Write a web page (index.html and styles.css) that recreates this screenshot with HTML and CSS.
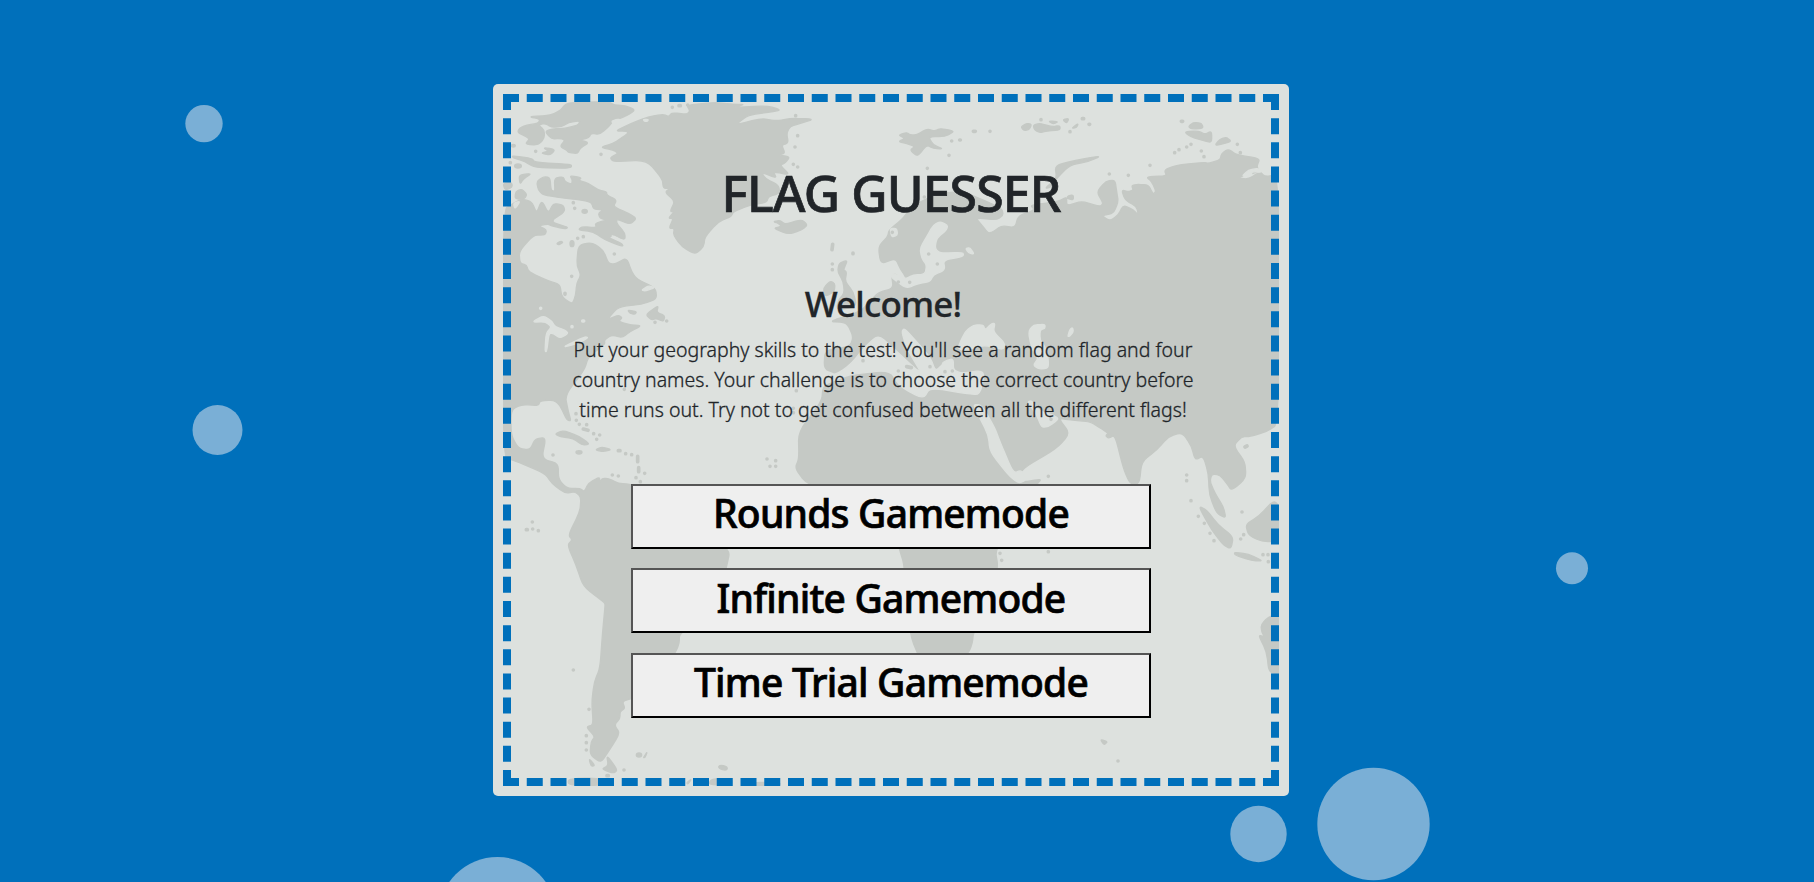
FILE: index.html
```html
<!DOCTYPE html>
<html lang="en">
<head>
<meta charset="utf-8">
<title>Flag Guesser</title>
<link rel="stylesheet" href="styles.css">
</head>
<body>
<svg class="bubbles" viewBox="0 0 1814 882" aria-hidden="true">
  <circle cx="204" cy="123.6" r="18.7"/><circle cx="217.5" cy="430" r="25"/>
  <circle cx="1258.5" cy="834" r="28.2"/><circle cx="1373.5" cy="824" r="56.2"/>
  <circle cx="1572" cy="568.3" r="16"/><circle cx="497.5" cy="916" r="59"/>
</svg>
<main class="card">
  <svg class="map" viewBox="54 57 2328 2076" aria-hidden="true">
    <g class="land">
      <!-- Arctic Canada -->
      <path d="M130 125L198 121L228 105L240 88L262 82L370 80L388 90L420 92L452 105L425 122L400 132L385 133L378 148L345 178L318 175L312 188L285 195L312 203L285 220L278 236L250 232L245 225L225 215L240 195L225 190L200 192L180 170L200 162L240 160L280 150L285 137L250 143L230 155L200 157L180 145L160 150L178 165L178 190L160 210L120 208L135 190L98 173L102 160L125 150L160 145L165 132Z"/>
      <path d="M82 242L140 250L150 262L260 268L258 280L150 278L120 260L84 248ZM102 300L140 295L115 312L105 328ZM155 320L175 305L195 307L198 345L210 350L208 310L235 305L240 320L260 328L262 315L255 302L290 308L280 316L310 325L340 345L365 350L365 360L395 375L385 395L430 415L455 430L435 448L395 432L395 445L420 475L420 495L385 480L370 488L410 505L415 515L360 495L325 470L280 465L290 455L335 458L330 445L365 435L345 430L340 415L355 405L325 402L320 382L290 375L240 370L175 360L160 345ZM92 350L110 342L126 358L118 372L90 372ZM54 325L80 322L82 337L60 345ZM168 235L190 228L175 218L205 222L208 228L195 240ZM215 505L228 498L234 503L220 510Z"/>
      <ellipse cx="99" cy="273" rx="10" ry="6"/><ellipse cx="85" cy="212" rx="6" ry="4"/><ellipse cx="299" cy="409" rx="8" ry="6"/><ellipse cx="261" cy="506" rx="6" ry="9"/>
      <!-- Americas -->
      <path d="M54 405L85 385L110 372L140 380L155 415L170 375L190 415L205 385L235 390L240 410L195 440L250 457L240 462L198 452L190 447L160 452L185 465L180 480L145 480L102 530L105 565L125 570L130 590L190 618L225 628L230 665L262 688L272 660L275 625L288 600L275 570L280 510L320 502L355 525L370 565L390 568L425 548L440 590L455 612L512 640L515 672L470 688L400 695L365 735L400 720L412 728L400 740L440 750L470 752L435 770L412 788L380 780L358 795L360 808L310 845L298 885L240 960L250 1010L258 1038L245 1035L225 990L205 975L165 978L160 992L110 988L78 1005L78 1080L100 1120L135 1125L150 1092L183 1087L170 1152L220 1165L220 1212L245 1240L285 1240L298 1250L310 1225L345 1205L342 1230L350 1210L370 1210L400 1225L438 1228L560 1280L660 1380L735 1425L725 1475L690 1600L583 1675L583 1705L570 1735L480 1870L438 1870L412 1880L420 1900L405 1910L405 1930L388 1950L405 1975L370 2030L348 2063L315 2040L318 2000L330 1985L303 1955L325 1950L320 1880L328 1820L345 1780L352 1680L360 1595L360 1585L350 1576L295 1535L273 1470L247 1410L262 1395L250 1380L285 1310L288 1265L270 1250L240 1255L200 1225L180 1195L85 1155L54 1150Z"/>
      <path d="M483 720L500 705L520 692L515 712L540 722L535 740L515 730L500 735ZM428 705L455 710L450 718L435 715ZM210 1077L235 1066L285 1085L315 1108L290 1110L265 1090L225 1085ZM330 1125L350 1116L380 1124L355 1130ZM365 2040L398 2085L385 2095L350 2082L370 2072ZM312 2050L330 2072L318 2074Z"/>
      <ellipse cx="282" cy="1132" rx="9" ry="5"/><ellipse cx="462" cy="2040" rx="8" ry="6"/><ellipse cx="714" cy="2078" rx="13" ry="6" transform="rotate(15 714 2078)"/>
      <path d="M475 2048L487 2030L480 2048ZM250 2112L330 2108L400 2126L300 2133L250 2128ZM680 2112L740 2110L740 2133L670 2128ZM795 2122L885 2122L885 2131L795 2131ZM605 2123L620 2112L608 2128Z"/>
      <!-- Greenland and Iceland -->
      <path d="M390 168L440 145L490 125L535 118L552 125L560 113L605 118L615 108L605 90L690 82L745 88L780 88L740 98L845 92L890 105L850 112L790 120L750 150L830 130L875 138L915 130L988 132L945 145L915 155L905 175L910 205L890 210L900 235L880 240L915 245L900 265L885 270L915 300L865 290L875 310L830 292L840 310L880 330L885 355L850 365L845 382L795 390L745 410L738 425L700 440L660 485L656 515L631 538L590 515L565 480L568 460L552 460L565 430L550 430L568 410L555 410L570 378L540 352L555 340L535 340L532 312L485 255L385 260L375 248L400 235L385 225L345 217L385 205L400 195L430 175L425 168ZM865 460L890 454L880 445L865 440L885 436L900 448L950 433L968 450L950 465L910 478Z"/>
      <!-- Europe, Asia and Africa -->
      <path d="M1180 515L1208 485L1212 465L1255 430L1275 400L1325 370L1395 350L1445 355L1495 375L1550 400L1555 420L1535 435L1472 428L1490 450L1510 475L1525 470L1550 452L1590 458L1600 422L1650 405L1635 390L1720 380L1745 365L1745 393L1790 378L1845 395L1855 385L1835 350L1863 318L1890 315L1895 350L1900 380L1885 415L1850 422L1875 438L1900 420L1915 390L1945 405L1960 420L1955 395L1920 375L1910 345L1930 350L1945 345L1940 332L1955 328L1990 330L2005 358L2013 348L2000 320L1983 305L2045 303L2038 285L2075 270L2155 262L2170 265L2205 255L2210 235L2230 222L2255 240L2325 250L2315 275L2325 290L2252 308L2290 313L2325 290L2340 305L2382 298L2382 1045L2345 1070L2295 1085L2270 1085L2245 1113L2280 1160L2283 1210L2240 1247L2225 1225L2205 1200L2180 1197L2175 1220L2190 1255L2215 1295L2223 1330L2195 1315L2173 1260L2170 1195L2155 1143L2130 1155L2120 1115L2092 1072L2050 1085L2015 1125L1970 1160L1963 1227L1935 1227L1915 1180L1890 1080L1870 1090L1862 1082L1870 1075L1840 1055L1815 1040L1755 1035L1720 1030L1755 1075L1715 1120L1605 1185L1610 1222L1670 1212L1655 1227L1600 1350L1530 1422L1540 1480L1500 1600L1465 1675L1462 1705L1450 1735L1380 1790L1310 1765L1273 1675L1258 1470L1243 1422L1220 1330L1100 1270L965 1227L930 1180L942 1150L940 1070L1010 980L1014 935L1050 915L1055 895L1017 882L1020 825L1095 815L1105 785L1085 742L1030 740L1125 710L1145 690L1180 652L1225 640L1220 600L1235 597L1242 620L1265 630L1262 605L1245 580L1232 550L1187 567Z"/>
      <path d="M1055 705L1115 695L1105 650L1080 620L1085 590L1075 585L1088 555L1062 565L1058 590L1075 620L1078 655L1060 675ZM1015 640L1035 618L1050 625L1048 650L1020 665ZM1680 340L1715 310L1710 272L1770 256L1850 242L1810 260L1755 270L1715 310L1695 338ZM1240 180L1265 172L1275 180L1295 180L1325 162L1350 168L1365 160L1410 168L1380 185L1330 185L1345 210L1375 222L1345 220L1325 210L1298 245L1275 225L1290 215L1265 205L1240 200L1260 190ZM1750 362L1765 360L1765 375L1745 370Z"/>
      <!-- Arctic islands -->
      <path d="M1608 155L1625 145L1640 148L1632 165L1615 166ZM1645 150L1665 145L1700 155L1725 152L1725 165L1685 168L1665 173L1648 165ZM1690 138L1720 140L1705 147ZM1733 134L1752 130L1745 145ZM1760 160L1780 145L1775 158ZM2110 155L2125 142L2150 145L2155 160L2120 162ZM2098 170L2140 168L2160 178L2180 168L2180 203L2155 197L2115 185ZM2188 213L2205 192L2225 187L2240 200Z"/>
      <!-- South-east Asia and Australia -->
      <path d="M2140 1293L2165 1305L2200 1350L2245 1385L2238 1422L2215 1410L2180 1365ZM2248 1432L2290 1437L2335 1458L2300 1457L2250 1440ZM2282 1348L2320 1325L2365 1277L2382 1290L2382 1400L2330 1400L2290 1380ZM2400 1610L2350 1625L2328 1650L2330 1670L2338 1685L2320 1680L2345 1730L2352 1795L2400 1795ZM1846 1993L1868 2000L1857 2010Z"/>
      <path class="dots" d="M562 97h0M582 92h4M608 90h0M152 229h0M348 238h0M265 383h0M269 400h0M278 490h0M295 485h0M388 537h0M260 604h0M240 655v3M510 742h0M545 738h0M76 263h0M932 122h0M938 182h0M930 216h0M925 268h0M938 276h0M1327 280h0M1392 241h0M1400 198h0M1424 195h2M1465 169h6M1515 169h0M1668 134h0M1792 131h4M1812 148h2M1755 170h0M2089 139h4M2257 208h0M2266 233h0M2069 233h0M2082 224h0M2105 216h0M2118 208h0M2149 228h0M2157 245h0M1995 271h0M1873 297h0M1930 301h0M1043 508l-2 16M1104 534v2M1042 567h0M1042 584h0M1318 366h0M418 943h0M273 1016h0M274 1036h0M283 1048h0M305 1049h0M295 1062l14 4M326 1076h0M344 1080h0M335 1093h0M400 1127h5M422 1136h0M440 1139h0M458 1144v16M461 1178v12M479 1195h0M453 1208h0M466 1220h0M204 1140h0M382 1200h0M400 1203h0M142 1341h0M124 1364h3M143 1362h0M160 1367h0M846 1152h0M872 1157h0M855 1174h0M872 1174h0M934 947h0M925 1000h0M925 1013h0M265 1785h0M312 1903h0M304 1982h0M304 2003h0M304 2025h0M417 2085h0M366 2102h4M1899 2058h0M1690 1204h0M1690 1430h0M1545 1435h0M1550 1456h0M2105 1200h0M2105 1217h0M2118 1277h0M2140 1324h0M2158 1345h0M2175 1375h0M2187 1397h0M2271 1311h0M2276 1379h0M2267 1392h0M2334 1439h0M2349 1439h0M2350 1460h0M2286 1113l-6 3"/>
    </g>
    <g class="sea">
      <!-- Mediterranean -->
      <path d="M1000 915L1060 895L1100 865L1140 815L1180 780L1225 820L1290 880L1310 895L1265 820L1250 770L1258 760L1290 795L1335 845L1352 890L1375 860L1405 850L1405 885L1430 895L1500 885L1485 960L1440 955L1335 938L1315 972L1245 935L1215 885L1100 897L1050 915L1014 930Z"/>
      <!-- Black Sea, Caspian and gulfs -->
      <path d="M1418 818L1440 770L1465 750L1495 750L1500 765L1520 745L1530 745L1525 770L1560 805L1555 825L1500 810L1455 822L1430 825ZM1630 770L1645 750L1680 748L1680 760L1665 765L1665 795L1680 815L1690 850L1690 880L1660 882L1645 870L1660 850L1640 820ZM1748 785L1755 762L1763 758L1765 770L1755 783ZM1628 980L1640 977L1665 1010L1705 1020L1722 1032L1690 1055L1670 1057L1655 1020ZM1465 988L1490 990L1530 1060L1545 1100L1585 1195L1610 1185L1625 1215L1600 1225L1570 1200L1515 1130L1510 1080L1480 1020Z"/>
      <!-- Baltic, North Sea inlets -->
      <path d="M1305 520L1325 485L1345 450L1365 440L1388 450L1385 465L1355 490L1350 520L1365 535L1435 532L1435 545L1375 555L1380 585L1345 600L1335 620L1300 625L1265 640L1235 620L1218 605L1225 595L1260 612L1285 600L1320 598L1325 570L1310 550ZM1442 520L1455 518L1468 538L1450 533ZM1215 460L1235 460L1238 480L1220 487ZM2270 305L2290 285L2320 280L2330 292L2300 290L2300 302Z"/>
      <path d="M140 742L175 722L200 738L210 755L240 765L250 775L225 790L205 775L192 775L185 830L180 830L183 775L200 755L180 740ZM230 818L300 785L310 788L280 805ZM380 138L400 132L412 137L385 147ZM475 133L490 133L488 139L478 139ZM378 480L405 492L395 495ZM85 385L106 378L90 402ZM470 645L490 632L510 638L480 648Z"/>
      <path class="dots" d="M167 700h0M261 755h0M293 738h3"/>
    </g>
    <path class="land dots" d="M1331 537h0M1313 585v2M1357 567h0M1240 621h0M1274 622h0M1222 472h0M1134 857h0M1240 888h0M1265 875l14 3M1335 875h0M1350 860l15 5-8 8M1380 890h0M1402 888h0M1698 1033h0"/>
  </svg>
  <div class="content">
    <h1 class="title">FLAG GUESSER</h1>
    <section class="intro">
      <h2 class="welcome">Welcome!</h2>
      <p class="text"><span class="line">Put your geography skills to the test! You'll see a random flag and four</span><span class="line">country names. Your challenge is to choose the correct country before</span><span class="line">time runs out. Try not to get confused between all the different flags!</span></p>
    </section>
    <nav class="modes">
      <button class="mode">Rounds Gamemode</button>
      <button class="mode">Infinite Gamemode</button>
      <button class="mode">Time Trial Gamemode</button>
    </nav>
  </div>
</main>
<script src="coast.js"></script>
</body>
</html>
```
FILE: coast.js
```js
// Rounds the corners of the coastline polygons so the shores read as curves.
const CUT = 0.36;
const toward = (a, b) => [a[0] + (b[0] - a[0]) * CUT, a[1] + (b[1] - a[1]) * CUT];

function roundRing(ring) {
  const pts = ring.split("L").map(p => p.trim().split(" ").map(Number));
  const n = pts.length;
  return pts.map((p, i) => {
    const start = toward(p, pts[(i + n - 1) % n]);
    const end = toward(p, pts[(i + 1) % n]);
    return (i ? "L" : "M") + start + "Q" + p + " " + end;
  }).join("") + "Z";
}

document.querySelectorAll(".map path:not(.dots)").forEach(path => {
  const rings = path.getAttribute("d").replace(/Z/g, "").split("M").filter(Boolean);
  path.setAttribute("d", rings.map(roundRing).join(""));
});
```
FILE: styles.css
```css
* { box-sizing: border-box; }
body {
  margin: 0;
  height: 882px;
  overflow: hidden;
  background: #0070bb;
  color: #212529;
  font-family: "Noto Sans", "Open Sans", sans-serif;
}
.bubbles {
  position: absolute;
  left: 0;
  top: 0;
  width: 1814px;
  height: 882px;
  fill: #7aafd6;
}
.card {
  position: relative;
  display: grid;
  width: 796px;
  height: 712px;
  margin: 84px 0 0 493px;
  padding: 10px;
  background: #dde1de;
  border-radius: 5px;
}
.map {
  grid-area: 1 / 1;
  width: 776px;
  height: 692px;
}
.land { fill: #c5c9c5; stroke: #c5c9c5; stroke-width: 4; stroke-linejoin: round; }
.sea { fill: #dde1de; stroke: #dde1de; stroke-width: 4; stroke-linejoin: round; }
.dots { fill: none; stroke-width: 11; stroke-linecap: round; }
.content {
  grid-area: 1 / 1;
  position: relative;
  display: flex;
  flex-direction: column;
  align-items: center;
  height: 692px;
  border: 8px dashed #0070bb;
}
.title {
  margin: 61px 0 0;
  font-size: 50px;
  line-height: 60px;
  font-weight: 500;
  letter-spacing: -0.9px;
  -webkit-text-stroke: 0.7px #212529;
  white-space: nowrap;
}
.intro {
  display: flex;
  flex-direction: column;
  align-items: center;
  margin: 60px 16px 0 0;
}
.welcome {
  margin: 0;
  font-size: 35px;
  line-height: 42px;
  font-weight: 500;
  letter-spacing: -0.8px;
  -webkit-text-stroke: 0.3px #212529;
}
.text {
  display: flex;
  flex-direction: column;
  align-items: center;
  margin: 10px 0 0;
  font-size: 19.5px;
  line-height: 30px;
  font-weight: 300;
  letter-spacing: 0.01px;
  -webkit-text-stroke: 0.3px #212529;
  white-space: nowrap;
}
.modes {
  display: flex;
  flex-direction: column;
  gap: 19.7px;
  width: 520px;
  margin: 59px 0 0;
}
.mode {
  height: 64.8px;
  padding: 0 0 6px;
  background: #efefef;
  border: 2px solid #000;
  border-top-color: #555;
  border-left-color: #555;
  color: #000;
  font: 500 39px/54px "Noto Sans", "Open Sans", sans-serif;
  letter-spacing: -0.8px;
  -webkit-text-stroke: 0.7px #000;
  white-space: nowrap;
}
```
